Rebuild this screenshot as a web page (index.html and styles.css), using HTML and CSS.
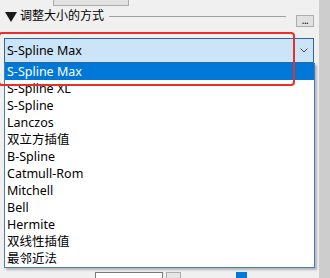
FILE: index.html
```html
<!DOCTYPE html>
<html>
<head>
<meta charset="utf-8">
<link rel="stylesheet" href="styles.css">
</head>
<body>
<div class="page">
  <div class="main">
    <div class="topbtn"></div>
    <div class="header">
      <svg class="tri" width="12" height="10" viewBox="0 0 12 10"><polygon points="0,0 12,0 6,10" fill="#1a1a1a"/></svg>
      <span class="title">调整大小的方式</span>
      <span class="rule"></span>
      <span class="more">...</span>
    </div>
    <div class="combo-area">
      <div class="combo">
        <span class="combo-text">S-Spline Max</span>
        <svg class="chev" width="8" height="5" viewBox="0 0 8 5"><polyline points="0.5,0.5 4,4 7.5,0.5" fill="none" stroke="#505050" stroke-width="1"/></svg>
      </div>
      <ul class="list">
        <li class="sel">S-Spline Max</li>
        <li>S-Spline XL</li>
        <li>S-Spline</li>
        <li>Lanczos</li>
        <li>双立方插值</li>
        <li>B-Spline</li>
        <li>Catmull-Rom</li>
        <li>Mitchell</li>
        <li>Bell</li>
        <li>Hermite</li>
        <li>双线性插值</li>
        <li>最邻近法</li>
      </ul>
      <div class="annot"></div>
    </div>
    <div class="bottom">
      <span class="field"></span>
      <span class="spin"></span>
      <span class="thumb"></span>
    </div>
  </div>
  <div class="strip"></div>
</div>
</body>
</html>
```

FILE: styles.css
```css
* { box-sizing: border-box; }
html, body { margin: 0; padding: 0; }
body {
  background: #f0f0f0;
  font-family: "Noto Sans", "Noto Sans CJK SC", sans-serif;
  font-size: 12.5px;
  color: #000;
  width: 330px;
  height: 278px;
  overflow: hidden;
}
.page {
  display: flex;
  height: 278px;
  overflow: hidden;
}
.main {
  width: 319px;
  display: flex;
  flex-direction: column;
}
.main > * { flex: none; }
.strip {
  width: 11px;
  background: #cdcdcd;
}
.topbtn {
  margin-left: 53px;
  width: 76px;
  height: 6px;
  background: #e1e1e1;
  border: 1px solid #adadad;
  border-top: none;
}
.header {
  margin-top: 2px;
  height: 16px;
  display: flex;
  align-items: center;
  padding-left: 5px;
  padding-right: 5px;
}
.tri { flex: none; margin-top: 1px; }
.title {
  margin-left: 3px;
  font-size: 12px;
  line-height: 16px;
  white-space: nowrap;
}
.rule {
  flex: 1;
  height: 1px;
  background: #a0a0a0;
  margin-left: 5px;
  margin-right: 10px;
}
.more {
  flex: none;
  width: 18px;
  height: 12px;
  margin-top: 10px;
  background: #e1e1e1;
  border: 1px solid #adadad;
  font-size: 10px;
  line-height: 9px;
  text-align: center;
  letter-spacing: -0.5px;
}
.combo-area {
  position: relative;
  margin-top: 14px;
  padding-left: 4px;
}
.combo {
  width: 310px;
  height: 25px;
  background: #cce4f7;
  border: 1px solid #2b68a8;
  display: flex;
  align-items: center;
  padding-left: 2px;
  padding-right: 5px;
}
.combo-text { flex: 1; line-height: 16px; }
.chev { flex: none; }
.list {
  list-style: none;
  margin: 0;
  padding: 0;
  width: 311px;
  background: #fff;
  border: 1px solid #4a7fb5;
  border-top: none;
  box-shadow: 2px 2px 2px rgba(0,0,0,0.25);
}
.list li {
  height: 17px;
  line-height: 17px;
  padding-left: 2px;
  white-space: nowrap;
}
.list li.sel {
  background: #0078d7;
  color: #fff;
}
.annot {
  position: absolute;
  left: -2px;
  top: -6px;
  width: 297px;
  height: 54px;
  border: 2.5px solid #e8302b;
  border-radius: 4px;
}
.bottom {
  margin-top: 4px;
  display: flex;
  align-items: flex-start;
  padding-left: 95px;
}
.field {
  width: 68px;
  height: 20px;
  background: #fff;
  border: 1px solid #7a7a7a;
}
.spin {
  margin-left: 3px;
  width: 15px;
  height: 20px;
  background: #e6e6e6;
  border: 1px solid #adadad;
}
.thumb {
  margin-left: 55px;
  width: 11px;
  height: 20px;
  background: #0078d7;
}
```
